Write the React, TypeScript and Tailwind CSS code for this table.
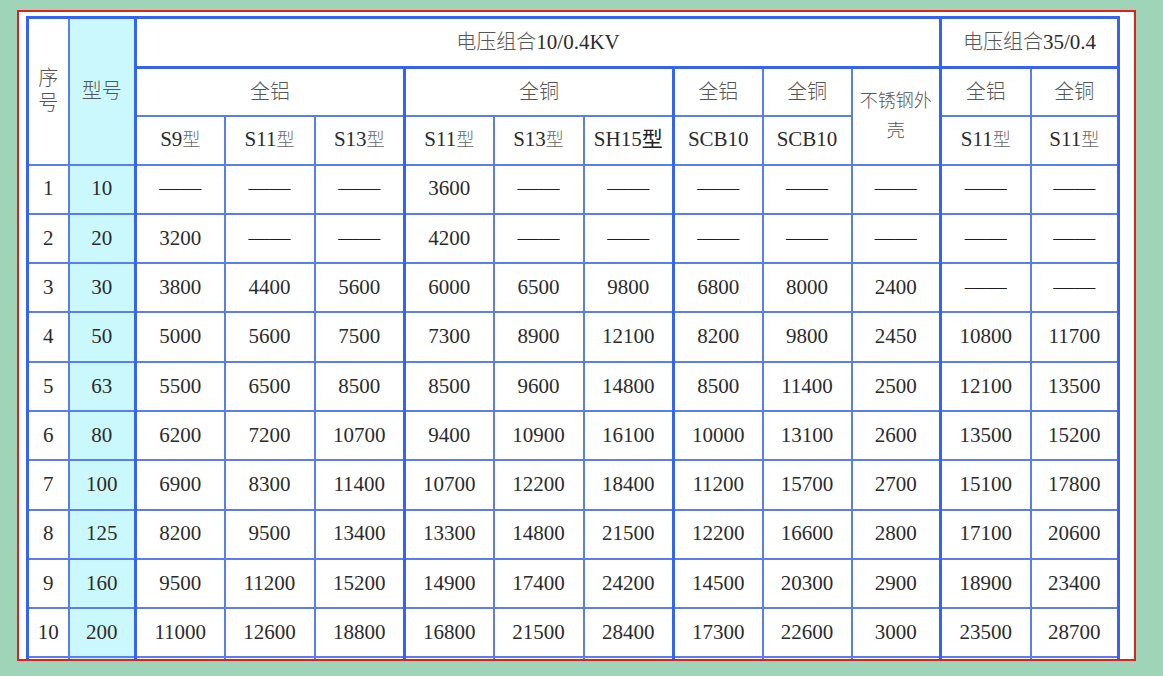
const D = "——";

const rows: (string | number)[][] = [
  [1, 10, D, D, D, 3600, D, D, D, D, D, D, D],
  [2, 20, 3200, D, D, 4200, D, D, D, D, D, D, D],
  [3, 30, 3800, 4400, 5600, 6000, 6500, 9800, 6800, 8000, 2400, D, D],
  [4, 50, 5000, 5600, 7500, 7300, 8900, 12100, 8200, 9800, 2450, 10800, 11700],
  [5, 63, 5500, 6500, 8500, 8500, 9600, 14800, 8500, 11400, 2500, 12100, 13500],
  [6, 80, 6200, 7200, 10700, 9400, 10900, 16100, 10000, 13100, 2600, 13500, 15200],
  [7, 100, 6900, 8300, 11400, 10700, 12200, 18400, 11200, 15700, 2700, 15100, 17800],
  [8, 125, 8200, 9500, 13400, 13300, 14800, 21500, 12200, 16600, 2800, 17100, 20600],
  [9, 160, 9500, 11200, 15200, 14900, 17400, 24200, 14500, 20300, 2900, 18900, 23400],
  [10, 200, 11000, 12600, 18800, 16800, 21500, 28400, 17300, 22600, 3000, 23500, 28700],
];

const widths = [41, 67, 89, 90, 90, 89, 90, 90, 89, 89, 89, 90, 88];
// columns whose left edge is a heavy group line
const heavy = [2, 5, 8, 11];

const cell = "border-2 border-[#5b7df2] p-0 text-center align-middle";
const thickL = "border-l-[3px] border-l-[#3563f5]";
const cjk = "text-[#555] font-light";

function Cell({ col, children, className = "" }: { col: number; children?: React.ReactNode; className?: string }) {
  return (
    <td className={`${cell} ${heavy.includes(col) ? thickL : ""} ${col === 1 ? "bg-[#cbf8fc]" : ""} ${className}`}>
      {children}
    </td>
  );
}

function Model({ name, heavyType = false }: { name: string; heavyType?: boolean }) {
  return (
    <>
      {name}
      <span className={heavyType ? "text-[#222]" : "text-[#666] font-light text-[18px]"}>型</span>
    </>
  );
}

export default function App() {
  return (
    <div className="min-h-screen bg-[#9fd4b8] pt-[10px] pl-[17px]">
      <div className="w-[1119px] h-[651px] border-2 border-[#e0201c] bg-white overflow-hidden pl-[7px] pt-[4px]">
        <table
          className="table-fixed border-collapse border-[3px] border-[#3563f5] text-[21px] text-[#2b2b2b]"
          style={{ fontFamily: '"Liberation Serif", "Noto Sans CJK SC", serif', width: 1091 }}
        >
          <colgroup>
            {widths.map((w, i) => (
              <col key={i} style={{ width: w }} />
            ))}
          </colgroup>
          <thead>
            <tr className="h-[50px]">
              <td rowSpan={3} className={`${cell} ${cjk} text-[20px] leading-[25px]`}>
                序<br />号
              </td>
              <td rowSpan={3} className={`${cell} ${cjk} text-[20px] bg-[#cbf8fc]`}>
                型号
              </td>
              <td colSpan={9} className={`${cell} ${thickL} border-b-[3px] border-b-[#3563f5]`}>
                <span className={`${cjk} text-[20px]`}>电压组合</span>10/0.4KV
              </td>
              <td colSpan={2} className={`${cell} ${thickL} border-b-[3px] border-b-[#3563f5] whitespace-nowrap`}>
                <span className={`${cjk} text-[20px]`}>电压组合</span>35/0.4
              </td>
            </tr>
            <tr className="h-[48px] text-[20px]">
              <td colSpan={3} className={`${cell} ${thickL} ${cjk}`}>全铝</td>
              <td colSpan={3} className={`${cell} ${thickL} ${cjk}`}>全铜</td>
              <td className={`${cell} ${thickL} ${cjk}`}>全铝</td>
              <td className={`${cell} ${cjk}`}>全铜</td>
              <td rowSpan={2} className={`${cell} ${cjk} text-[18px] leading-[30px] px-[4px]`}>
                不锈钢外壳
              </td>
              <td className={`${cell} ${thickL} ${cjk}`}>全铝</td>
              <td className={`${cell} ${cjk}`}>全铜</td>
            </tr>
            <tr className="h-[49px]">
              <Cell col={2}><Model name="S9" /></Cell>
              <Cell col={3}><Model name="S11" /></Cell>
              <Cell col={4}><Model name="S13" /></Cell>
              <Cell col={5}><Model name="S11" /></Cell>
              <Cell col={6}><Model name="S13" /></Cell>
              <Cell col={7}><Model name="SH15" heavyType /></Cell>
              <Cell col={8}>SCB10</Cell>
              <Cell col={9}>SCB10</Cell>
              <Cell col={11}><Model name="S11" /></Cell>
              <Cell col={12}><Model name="S11" /></Cell>
            </tr>
          </thead>
          <tbody>
            {rows.map((r, ri) => (
              <tr key={ri} className="h-[49.3px]">
                {r.map((v, ci) => (
                  <Cell key={ci} col={ci} className={v === D ? "text-[#1f1f1f]" : ""}>
                    {v}
                  </Cell>
                ))}
              </tr>
            ))}
            {/* next row, cut off by the frame */}
            <tr className="h-[49.3px]">
              {widths.map((_, ci) => (
                <Cell key={ci} col={ci} />
              ))}
            </tr>
          </tbody>
        </table>
      </div>
    </div>
  );
}
